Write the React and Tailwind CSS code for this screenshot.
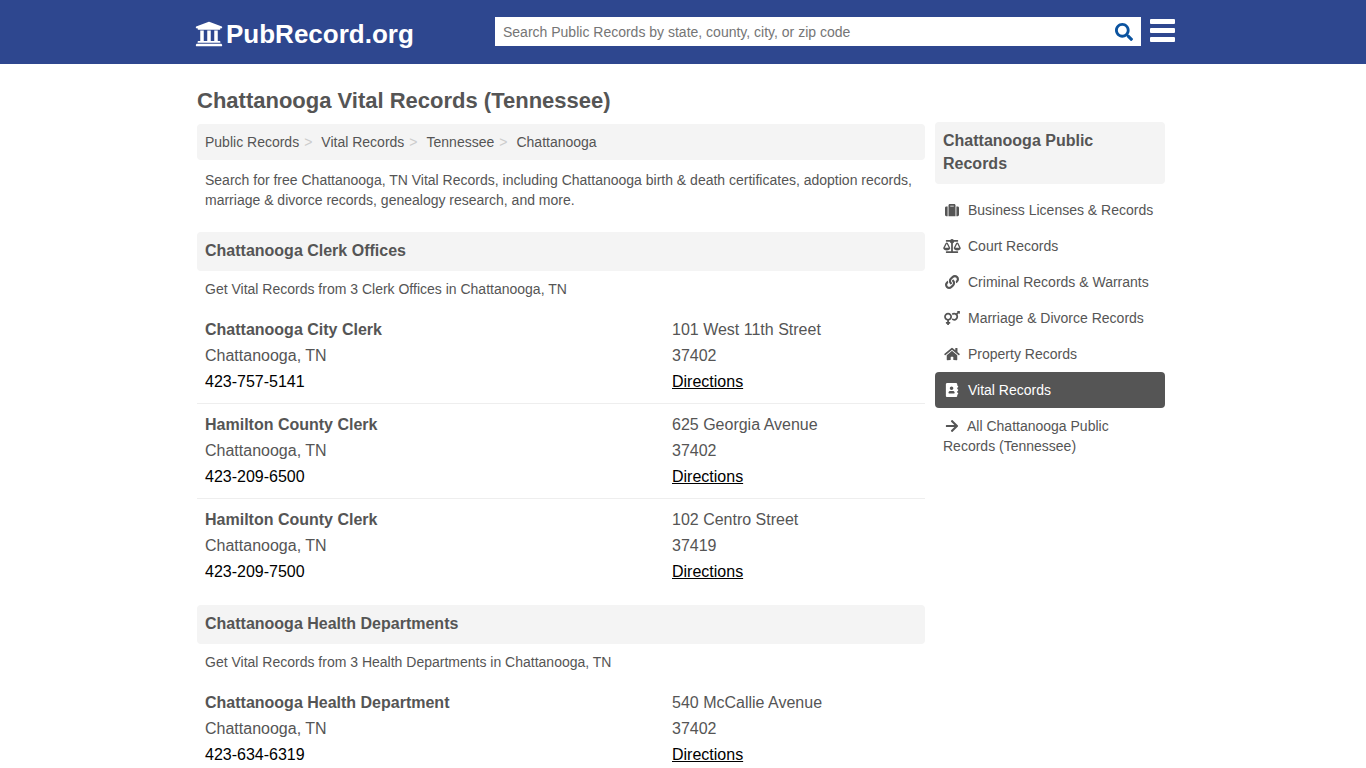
import {
  FaUniversity,
  FaSearch,
  FaSuitcase,
  FaBalanceScale,
  FaLink,
  FaVenusMars,
  FaHome,
  FaAddressBook,
  FaArrowRight,
} from "react-icons/fa";

const crumbs = ["Public Records", "Vital Records", "Tennessee", "Chattanooga"];

const sections = [
  {
    title: "Chattanooga Clerk Offices",
    text: "Get Vital Records from 3 Clerk Offices in Chattanooga, TN",
    offices: [
      { name: "Chattanooga City Clerk", phone: "423-757-5141", street: "101 West 11th Street", zip: "37402" },
      { name: "Hamilton County Clerk", phone: "423-209-6500", street: "625 Georgia Avenue", zip: "37402" },
      { name: "Hamilton County Clerk", phone: "423-209-7500", street: "102 Centro Street", zip: "37419" },
    ],
  },
  {
    title: "Chattanooga Health Departments",
    text: "Get Vital Records from 3 Health Departments in Chattanooga, TN",
    offices: [
      { name: "Chattanooga Health Department", phone: "423-634-6319", street: "540 McCallie Avenue", zip: "37402" },
    ],
  },
];

const recordLinks = [
  { label: "Business Licenses & Records", icon: FaSuitcase },
  { label: "Court Records", icon: FaBalanceScale },
  { label: "Criminal Records & Warrants", icon: FaLink },
  { label: "Marriage & Divorce Records", icon: FaVenusMars },
  { label: "Property Records", icon: FaHome },
  { label: "Vital Records", icon: FaAddressBook, active: true },
];

function Header() {
  return (
    <header className="bg-[#2e478f]">
      <div className="mx-auto flex h-16 max-w-[984px] items-start justify-between pl-1">
        <a href="#" className="mt-[19px] flex items-center gap-[3px] text-[26px] leading-[30px] font-bold text-white">
          <FaUniversity className="size-7" />
          PubRecord.org
        </a>
        <div className="mt-[17px] flex items-start gap-[9px]">
          <form className="flex h-[29px] w-[646px] items-center bg-white pr-2" onSubmit={(e) => e.preventDefault()}>
            <input
              type="text"
              aria-label="Search Public Records"
              placeholder="Search Public Records by state, county, city, or zip code"
              className="h-full flex-1 bg-transparent pl-2 text-sm text-[#555] outline-none placeholder:text-[#757575]"
            />
            <button type="submit" aria-label="Search" className="text-[#0b539f]">
              <FaSearch size={18} />
            </button>
          </form>
          <button type="button" aria-label="Menu" className="mt-[2px] flex w-[25px] flex-col gap-1">
            <span className="h-[5px] w-full rounded-[1px] bg-white" />
            <span className="h-[5px] w-full rounded-[1px] bg-white" />
            <span className="h-[5px] w-full rounded-[1px] bg-white" />
          </button>
        </div>
      </div>
    </header>
  );
}

function Office({ office }) {
  return (
    <li className="flex border-b border-[#eee] px-2 py-2 leading-[26px] last:border-b-0">
      <div className="flex-1">
        <h3 className="font-bold">{office.name}</h3>
        <p>Chattanooga, TN</p>
        <a href="#" className="text-black">{office.phone}</a>
      </div>
      <div className="w-[245px]">
        <p>{office.street}</p>
        <p>{office.zip}</p>
        <a href="#" className="text-black underline">Directions</a>
      </div>
    </li>
  );
}

function Sidebar() {
  return (
    <aside className="mt-[34px] w-[230px] shrink-0 text-sm">
      <h2 className="mb-2 rounded bg-[#f4f4f4] px-2 pt-[7px] pb-[9px] text-base leading-[23px] font-bold">
        Chattanooga Public Records
      </h2>
      <nav>
        {recordLinks.map(({ label, icon: Icon, active }) => (
          <a
            key={label}
            href="#"
            className={`flex items-center gap-[7px] rounded px-2 py-2 leading-5 ${active ? "bg-[#555] text-white" : ""}`}
          >
            <Icon className="h-[14px] w-[18px]" />
            {label}
          </a>
        ))}
        <a href="#" className="block px-2 py-2 leading-5">
          <FaArrowRight size={14} className="mr-2 mb-[3px] ml-[2px] inline" />
          All Chattanooga Public Records (Tennessee)
        </a>
      </nav>
    </aside>
  );
}

export default function App() {
  return (
    <div className="min-h-screen bg-white font-['Liberation_Sans',Arial,sans-serif] text-[#555]">
      <Header />
      <div className="mx-auto flex max-w-[980px] gap-[10px] pt-6 pr-2 pl-1">
        <main className="min-w-0 flex-1">
          <h1 className="mb-[10px] text-[22px] leading-[26px] font-bold">Chattanooga Vital Records (Tennessee)</h1>
          <nav aria-label="Breadcrumb" className="rounded bg-[#f4f4f4] px-2 py-2 text-sm leading-5">
            <ol className="flex">
              {crumbs.map((crumb, i) => (
                <li key={crumb}>
                  {i > 0 && <span className="mr-[9px] ml-[5px] text-[#ccc]">&gt;</span>}
                  <a href="#">{crumb}</a>
                </li>
              ))}
            </ol>
          </nav>
          <p className="px-2 pt-[10px] pb-[22px] text-sm leading-5">
            Search for free Chattanooga, TN Vital Records, including Chattanooga birth &amp; death certificates,
            adoption records, marriage &amp; divorce records, genealogy research, and more.
          </p>
          {sections.map((section) => (
            <section key={section.title} className="mb-3">
              <h2 className="rounded bg-[#f4f4f4] px-2 pt-[7px] pb-[9px] leading-[23px] font-bold">{section.title}</h2>
              <p className="px-2 pt-2 pb-[10px] text-sm leading-5">{section.text}</p>
              <ul>
                {section.offices.map((office) => (
                  <Office key={office.phone} office={office} />
                ))}
              </ul>
            </section>
          ))}
        </main>
        <Sidebar />
      </div>
    </div>
  );
}
